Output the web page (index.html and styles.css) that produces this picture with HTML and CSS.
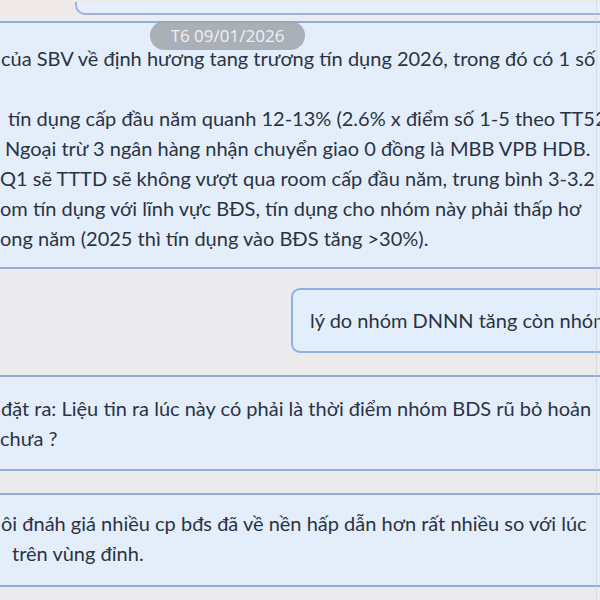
FILE: index.html
```html
<!DOCTYPE html>
<html lang="vi">
<head>
<meta charset="utf-8">
<title>Chat</title>
<link rel="stylesheet" href="styles.css">
</head>
<body>
<div class="chat">
  <div class="top-row"><div class="bubble-tail"></div></div>
  <div class="spacer-top"></div>

  <div class="bubble bubble-left b1">
    <div class="line l-a">của SBV về định hương tang trương tín dụng 2026, trong đó có 1 số</div>
    <div class="line blank">&nbsp;</div>
    <div class="line l-b">tín dụng cấp đầu năm quanh 12-13% (2.6% x điểm số 1-5 theo TT52</div>
    <div class="line l-c">Ngoại trừ 3 ngân hàng nhận chuyển giao 0 đồng là MBB VPB HDB.</div>
    <div class="line">Q1 sẽ TTTD sẽ không vượt qua room cấp đầu năm, trung bình 3-3.2</div>
    <div class="line">om tín dụng với lĩnh vực BĐS, tín dụng cho nhóm này phải thấp hơ</div>
    <div class="line">ong năm (2025 thì tín dụng vào BĐS tăng &gt;30%).</div>
  </div>

  <div class="bubble bubble-right">
    <div class="line">lý do nhóm DNNN tăng còn nhóm</div>
  </div>

  <div class="bubble bubble-left b2">
    <div class="line l-a">đặt ra: Liệu tin ra lúc này có phải là thời điểm nhóm BDS rũ bỏ hoản</div>
    <div class="line">chưa ?</div>
  </div>

  <div class="bubble bubble-left b3">
    <div class="line l-a">ôi đnáh giá nhiều cp bđs đã về nền hấp dẫn hơn rất nhiều so với lúc</div>
    <div class="line l-d">trên vùng đỉnh.</div>
  </div>

  <div class="date-pill">T6 09/01/2026</div>
  <div class="edge"></div>
</div>
</body>
</html>
```

FILE: styles.css
```css
html, body {
  margin: 0;
  padding: 0;
  width: 600px;
  height: 600px;
  overflow: hidden;
  background: #ebebed;
}

.chat {
  position: relative;
  width: 600px;
  height: 600px;
  overflow: hidden;
  font-family: "Lato", "Open Sans", sans-serif;
  font-size: 20px;
  line-height: 30px;
  color: #2a3343;
}

.top-row {
  height: 15px;
  background: #efeae9;
  display: flex;
  padding-top: 2px;
  box-sizing: border-box;
}

.bubble-tail {
  margin-left: 75px;
  flex: 1;
  background: #e6effb;
  border-left: 2px solid #9db3da;
  border-bottom: 2px solid #9db3da;
  border-bottom-left-radius: 10px;
}

.spacer-top {
  height: 6px;
  background: #e9edf2;
}

.bubble {
  background: #e4eefb;
  border: 2px solid #93acd9;
  box-sizing: border-box;
}

.bubble-left {
  border-left: none;
  border-right: none;
  width: 600px;
}

.b1 {
  padding: 20px 0 14px;
}

.b2 {
  margin-top: 22px;
  padding: 16px 0 16px;
}

.b3 {
  margin-top: 22px;
  padding: 13px 0 17px;
}

.bubble-right {
  margin-top: 19px;
  margin-left: 291px;
  width: 360px;
  border-right: none;
  border-radius: 9px 0 0 9px;
  padding: 15px 0 16px 17px;
  background: #e3eefc;
  border-color: #8fb0e2;
}

.line {
  white-space: nowrap;
}

.l-a { padding-left: 1px; }
.l-b { padding-left: 8px; }
.l-c { padding-left: 5px; }
.l-d { padding-left: 12px; }

.date-pill {
  position: absolute;
  left: 150px;
  top: 21px;
  width: 155px;
  height: 29px;
  border-radius: 15px;
  background: rgba(160, 164, 172, 0.85);
  color: #eef0f4;
  font-family: "Open Sans", sans-serif;
  font-size: 17px;
  line-height: 29px;
  text-align: center;
}

.edge {
  position: absolute;
  right: 3px;
  top: 0;
  width: 1px;
  height: 600px;
  background: rgba(200, 206, 216, 0.6);
}
```
